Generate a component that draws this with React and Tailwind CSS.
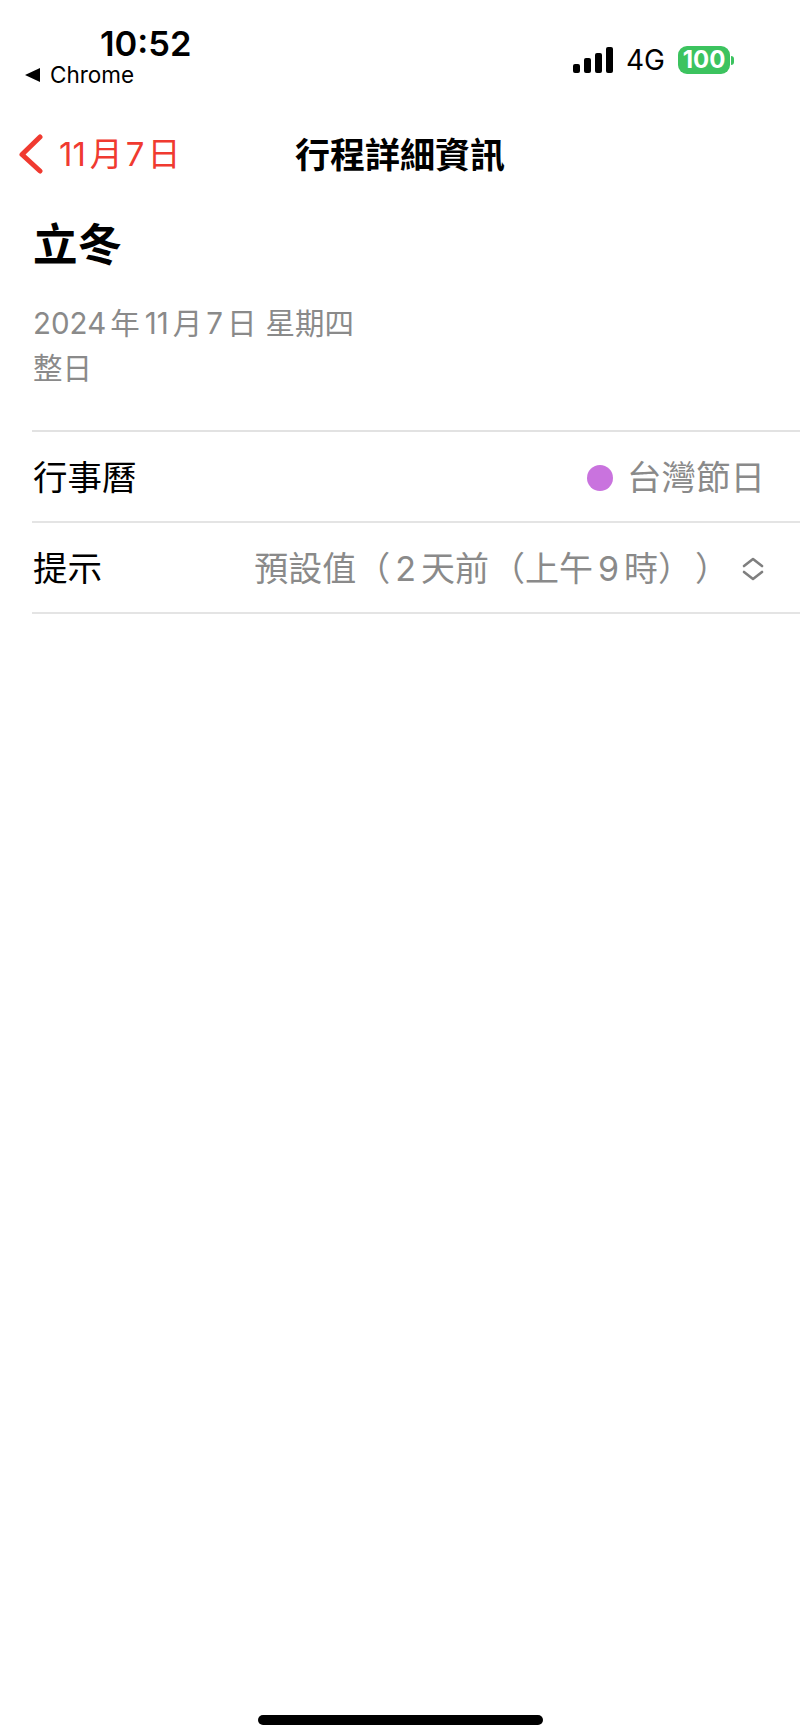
const cjk = { fontFamily: '"Inter", "Noto Sans CJK TC", sans-serif' };

const SignalIcon = () => (
  <svg width="40" height="26" viewBox="0 0 40 26" fill="#000">
    <rect x="0" y="17" width="7" height="9" rx="2" />
    <rect x="11" y="11" width="7" height="15" rx="2" />
    <rect x="22" y="6" width="7" height="20" rx="2" />
    <rect x="33" y="0" width="7" height="26" rx="2" />
  </svg>
);

const Battery = () => (
  <div className="flex items-center">
    <div className="w-[52px] h-[28px] rounded-[9px] bg-[#3cc35f] text-white text-[24px] font-bold leading-[28px] text-center">
      100
    </div>
    <div className="w-[3px] h-[9px] ml-[1px] rounded-r-full bg-[#3cc35f]" />
  </div>
);

const Chevrons = () => (
  <svg width="22" height="24" viewBox="0 0 22 24" fill="none" stroke="#7f7f7f" strokeWidth="2.6" strokeLinecap="round" strokeLinejoin="round" className="block">
    <path d="M2 9 L11 2 L20 9" />
    <path d="M2 15 L11 22 L20 15" />
  </svg>
);

export default function App() {
  return (
    <div lang="zh-TW" className="w-[800px] h-[1734px] bg-white flex flex-col text-black" style={cjk}>
      {/* status bar */}
      <div className="h-[116px] flex justify-between pl-[25px] pr-[66px]">
        <div className="pt-[24px]">
          <div className="ml-[75px] text-[34.5px] leading-[40px] font-semibold">10:52</div>
          <div className="flex items-center text-[22.5px] leading-[28px] -mt-[3px]">
            <svg width="15" height="14" viewBox="0 0 15 14" fill="#000"><path d="M0 7 L15 0 V14 Z" /></svg>
            <span className="ml-[10px]">Chrome</span>
          </div>
        </div>
        <div className="flex items-center gap-[13px] h-[60px] mt-[30px]">
          <SignalIcon />
          <span className="text-[28px] leading-none">4G</span>
          <Battery />
        </div>
      </div>

      {/* nav */}
      <div className="relative h-[78px] flex items-center justify-center">
        <div className="absolute left-[18px] top-[18px] flex items-center text-[#f03a30]">
          <svg width="25" height="40" viewBox="0 0 25 40" fill="none" stroke="#f03a30" strokeWidth="5" strokeLinecap="round" strokeLinejoin="round">
            <path d="M22 3 L4 20.5 L22 37" />
          </svg>
          <span className="ml-[16px] text-[33px] leading-[40px]">
            <span className="inline-block">11</span>
            <span className="inline-block ml-[4px]">月</span>
            <span className="inline-block mx-[3px]">7</span>
            <span className="inline-block">日</span>
          </span>
        </div>
        <div className="text-[35px] font-semibold leading-[44px]">行程詳細資訊</div>
      </div>

      {/* title + date */}
      <div className="pl-[33px] pt-[25px]">
        <div className="text-[44.5px] font-bold leading-[52px]">立冬</div>
        <div className="mt-[30px] text-[#8a8a8a] text-[29.5px] leading-[45px]">
          <div>
            <span className="inline-block">2024</span>
            <span className="inline-block ml-[4px]">年</span>
            <span className="inline-block ml-[5px] mr-[4px]">11</span>
            <span className="inline-block">月</span>
            <span className="inline-block mx-[4px]">7</span>
            <span className="inline-block">日</span>
            <span className="inline-block ml-[9px]">星期四</span>
          </div>
          <div>整日</div>
        </div>
      </div>

      {/* rows */}
      <div className="ml-[32px] mt-[39px] border-t-2 border-[#e2e2e2]">
        <div className="h-[91px] pt-[2px] flex items-center justify-between pr-[35px] border-b-2 border-[#e4e4e4] text-[34.5px]">
          <span className="pl-[1px]">行事曆</span>
          <div className="flex items-center text-[#8a8a8a]">
            <span className="w-[26px] h-[26px] rounded-full bg-[#c973de] mr-[14px]" />
            台灣節日
          </div>
        </div>
        <div className="h-[91px] pt-[2px] flex items-center justify-between pr-[36px] border-b-2 border-[#e4e4e4] text-[34px]">
          <span className="pl-[1px] text-[34.5px]">提示</span>
          <div className="flex items-center text-[#8a8a8a]">
            <span>
              <span className="inline-block">預設值</span>
              <span className="inline-block">（</span>
              <span className="inline-block mx-[5px]">2</span>
              <span className="inline-block">天前</span>
              <span className="inline-block ml-[2px]">（</span>
              <span className="inline-block">上午</span>
              <span className="inline-block mx-[5px]">9</span>
              <span className="inline-block">時</span>
              <span className="inline-block">）</span>
              <span className="inline-block ml-[3px]">）</span>
            </span>
            <span className="ml-[13px]"><Chevrons /></span>
          </div>
        </div>
      </div>

      {/* home indicator */}
      <div className="mt-auto mb-[9px] mx-auto w-[285px] h-[10px] rounded-full bg-black" />
    </div>
  );
}
